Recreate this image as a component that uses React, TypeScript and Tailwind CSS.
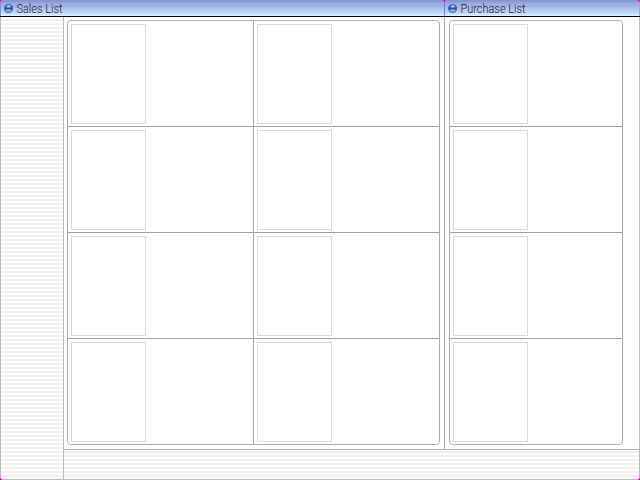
type ListProps = { rows: number; cols: number; width: string };

const shades = [
  "bg-[#8296cf]", "bg-[#8a9cd4]", "bg-[#8fa2d8]", "bg-[#96acde]",
  "bg-[#a3b5e6]", "bg-[#94a9e0]", "bg-[#a8bbeb]", "bg-[#a3b8ea]",
  "bg-[#adc3f2]", "bg-[#b4c9f3]", "bg-[#afc7f3]", "bg-[#bdd4f8]",
  "bg-[#b9d4f9]", "bg-[#c9e0fc]", "bg-[#cde6fe]", "bg-[#d8f0ff]",
];

const stripes =
  "bg-[repeating-linear-gradient(to_bottom,#fff_0px,#fff_2px,#f0f0f0_2px,#f0f0f0_4px)]";

function Orb() {
  return (
    <svg width="10" height="10" viewBox="0 0 10 10" className="shrink-0">
      <defs>
        <linearGradient id="orb" x1="0" y1="0" x2="0" y2="1">
          <stop offset="0" stopColor="#5f82c8" />
          <stop offset="0.48" stopColor="#3159ac" />
          <stop offset="1" stopColor="#78aaea" />
        </linearGradient>
      </defs>
      <circle cx="4.6" cy="4.6" r="4" fill="url(#orb)" stroke="#3d5da4" strokeWidth="1" />
      <rect x="3" y="1.2" width="3.4" height="2.4" rx="1" fill="#b4c8f0" />
      <rect x="1" y="4" width="7.2" height="1" fill="#294c9c" />
      <rect x="2" y="5.4" width="5.2" height="2.4" rx="1.2" fill="#83b2ee" />
    </svg>
  );
}

function TitleBar({ title, textWidth }: { title: string; textWidth: number }) {
  return (
    <div className="relative h-4 overflow-hidden">
      <div>
        {shades.map((shade, i) => (
          <div key={i} className={"h-px " + shade} />
        ))}
      </div>
      <div className="absolute inset-0 flex items-start gap-[2px] pl-[3px]">
        <div className="pt-1"><Orb /></div>
        <svg width={textWidth + 4} height="16" className="overflow-visible">
          <text x="0.5" y="13" fontSize="12" fontWeight="300" textLength={textWidth} lengthAdjust="spacingAndGlyphs" fill="#20222c">
            {title}
          </text>
        </svg>
      </div>
    </div>
  );
}

function CardGrid({ rows, cols, width }: ListProps) {
  return (
    <div className={"h-[425px] overflow-hidden rounded-[4px] border border-[#acacac] " + width}>
      {Array.from({ length: rows }, (_, r) => (
        <div key={r} className={"flex " + (r ? "h-[106px] border-t border-[#a0a0a0]" : "h-[105px]")}>
          {Array.from({ length: cols }, (_, c) => (
            <div key={c} className={"flex-1 basis-0 p-[3px] " + (c ? "border-l border-[#a8a8a8]" : "")}>
              <div className="h-[100px] w-[75px] border border-[#dadada]" />
            </div>
          ))}
        </div>
      ))}
    </div>
  );
}

function Corner({ at }: { at: string }) {
  return <div className={"absolute size-px bg-[#ff00ff] " + at} />;
}

export default function App() {
  return (
    <div className="relative flex h-[480px] w-[640px] flex-col overflow-hidden bg-white font-['Roboto','Liberation_Sans',sans-serif]">
      <header className="flex h-[17px] border-b border-black">
        <div className="w-px bg-[#8093c4]" />
        <div className="w-[443px]"><TitleBar title="Sales List" textWidth={46} /></div>
        <div className="w-px bg-[#7187bd]" />
        <div className="w-[194px]"><TitleBar title="Purchase List" textWidth={65} /></div>
        <div className="w-px bg-[#aaaaaa]" />
      </header>
      <main className="flex min-h-0 flex-1 border-x border-b border-[#bbbbbb]">
        <aside className={"w-[63px] shrink-0 border-r border-[#bbbbbb] " + stripes} />
        <div className="flex flex-1 flex-col">
          <div className="flex h-[433px] border-b border-[#b0b0b0]">
            <section className="w-[381px] shrink-0 border-r border-[#a8a8a8] pl-[3px] pt-[3px]">
              <CardGrid rows={4} cols={2} width="w-[373px]" />
            </section>
            <section className="pl-[4px] pt-[3px]">
              <CardGrid rows={4} cols={1} width="w-[174px]" />
            </section>
          </div>
          <footer className="flex-1 bg-[repeating-linear-gradient(to_bottom,#fff_0px,#fff_1px,#f0f0f0_1px,#f0f0f0_3px,#fff_3px,#fff_4px)]" />
        </div>
      </main>
      <Corner at="left-0 top-0" />
      <Corner at="left-px top-0" />
      <Corner at="left-0 top-px" />
      <Corner at="left-[443px] top-0" />
      <Corner at="left-[444px] top-0" />
      <Corner at="left-[445px] top-0" />
      <Corner at="left-[444px] top-px" />
      <Corner at="right-0 top-0" />
      <Corner at="right-px top-0" />
      <Corner at="right-0 top-px" />
      <Corner at="bottom-0 left-0" />
      <Corner at="bottom-0 left-px" />
      <Corner at="bottom-px left-0" />
      <Corner at="bottom-0 right-0" />
      <Corner at="bottom-0 right-px" />
      <Corner at="bottom-px right-0" />
    </div>
  );
}
